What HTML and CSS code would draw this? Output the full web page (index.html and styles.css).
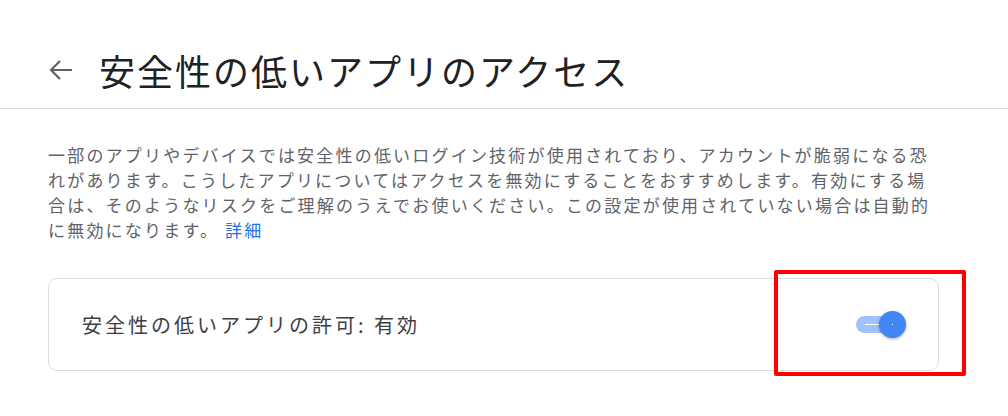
FILE: index.html
```html
<!DOCTYPE html>
<html lang="ja">
<head>
  <meta charset="UTF-8">
  <meta name="viewport" content="width=device-width, initial-scale=1.0">
  <title>安全性の低いアプリのアクセス</title>
  <link rel="stylesheet" href="styles.css">
</head>
<body>
  <header class="top">
    <button class="back" aria-label="戻る">
      <svg width="26" height="22" viewBox="0 0 26 22">
        <path d="M24 11H3M12 2L3 11l9 9" fill="none" stroke="#5f6368" stroke-width="2.2"/>
      </svg>
    </button>
    <h1>安全性の低いアプリのアクセス</h1>
  </header>

  <main class="content">
    <p class="desc">一部のアプリやデバイスでは安全性の低いログイン技術が使用されており、アカウントが脆弱になる恐れがあります。こうしたアプリについてはアクセスを無効にすることをおすすめします。有効にする場合は、そのようなリスクをご理解のうえでお使いください。この設定が使用されていない場合は自動的に無効になります。<a href="#">詳細</a></p>

    <div class="card">
      <span class="card-label">安全性の低いアプリの許可: 有効</span>
      <div class="switch">
        <span class="track"><span class="mark"></span></span>
        <span class="knob"></span>
      </div>
    </div>
  </main>

  <!-- 注目ポイントの枠 -->
  <div class="highlight"></div>
</body>
</html>
```

FILE: styles.css
```css
body {
  margin: 0;
  background-color: #fff;
  font-family: "Noto Sans CJK JP", "Noto Sans", sans-serif;
  color: #202124;
}
.top {
  display: flex;
  align-items: center;
  height: 76px;
  padding: 32px 0 0 48px;
  border-bottom: 1px solid #dadce0;
}
.back {
  display: flex;
  padding: 0;
  margin: 0 25px 0 0;
  background: none;
  border: none;
  cursor: pointer;
}
h1 {
  margin: 0;
  font-size: 36px;
  font-weight: 400;
  letter-spacing: 2px;
  color: #202124;
}
.content {
  padding: 33px 48px 0;
}
.desc {
  width: 896px;
  margin: 0;
  font-size: 17px;
  line-height: 25px;
  letter-spacing: 2.2px;
  color: #5f6368;
}
.desc a {
  margin-left: 6px;
  color: #1a73e8;
  text-decoration: none;
}
.card {
  display: flex;
  align-items: center;
  justify-content: space-between;
  box-sizing: border-box;
  width: 891px;
  height: 93px;
  margin-top: 36px;
  padding: 0 32px 0 33px;
  border: 1px solid #dadce0;
  border-radius: 9px;
}
.card-label {
  font-size: 20px;
  letter-spacing: 3px;
  color: #3c4043;
}
.switch {
  position: relative;
  width: 50px;
  height: 27px;
}
.track {
  position: absolute;
  left: 0;
  top: 5px;
  width: 40px;
  height: 17px;
  border-radius: 9px;
  background-color: #a0c1f9;
}
.mark {
  position: absolute;
  left: 9px;
  top: 8px;
  width: 14px;
  height: 1px;
  background-color: #fff;
}
.knob {
  position: absolute;
  left: 23px;
  top: 0;
  width: 27px;
  height: 27px;
  border-radius: 50%;
  background-color: #4285f4;
  box-shadow: 0 1px 3px rgba(0, 0, 0, 0.35);
}
.knob::after {
  content: "";
  position: absolute;
  left: 13px;
  top: 13px;
  width: 1px;
  height: 1px;
  background-color: #fff;
}
.highlight {
  position: absolute;
  left: 774px;
  top: 270px;
  width: 184px;
  height: 98px;
  border: 4px solid #ff0000;
  border-radius: 2px;
}
```
